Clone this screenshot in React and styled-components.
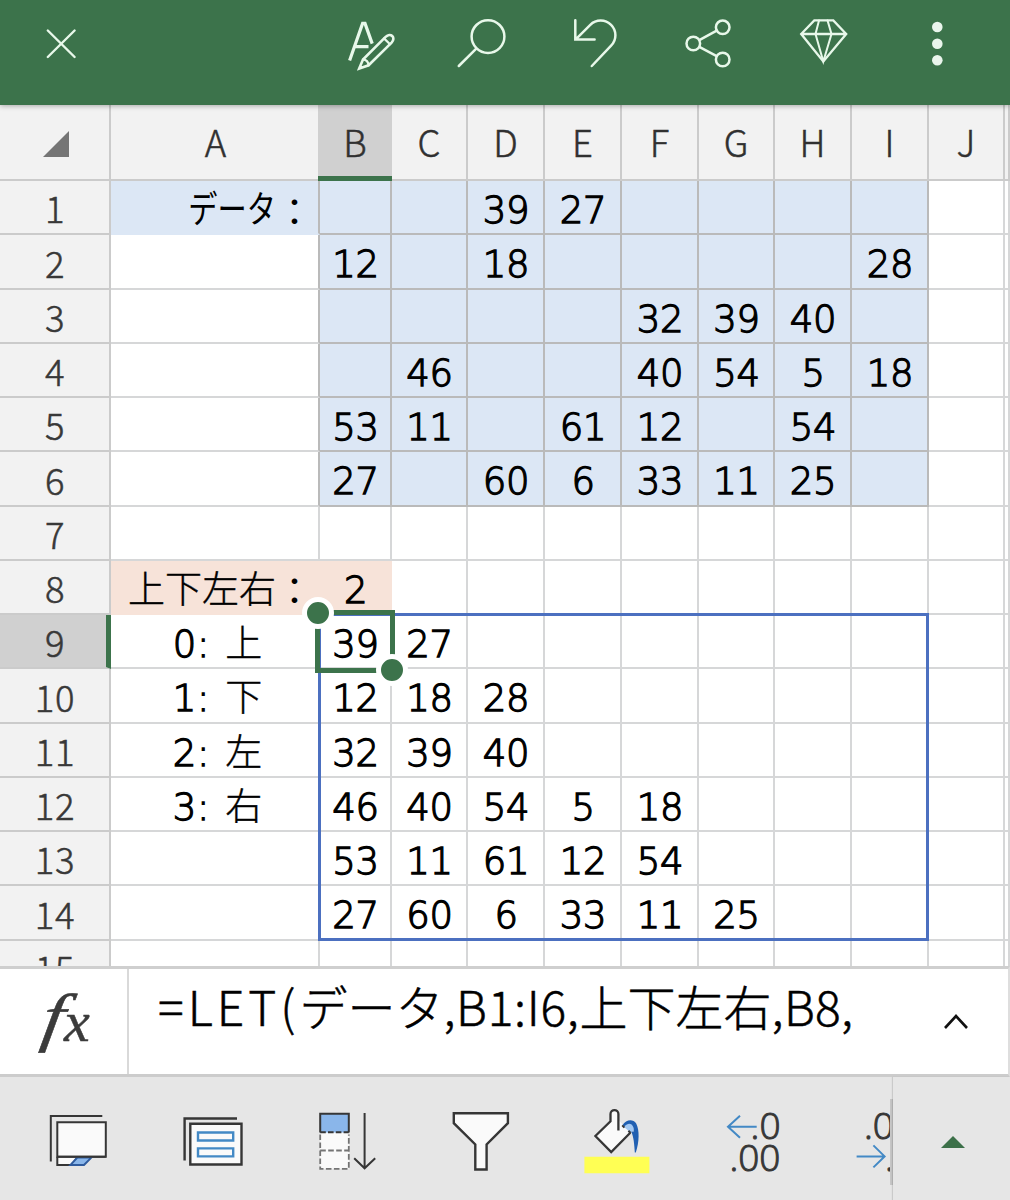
import styled, { createGlobalStyle } from "styled-components";

const COLUMNS = ["A", "B", "C", "D", "E", "F", "G", "H", "I", "J"];

const ROWS = [
    [{ kana: "データ", colon: "：" }, "", "", "39", "27", "", "", "", ""],
    ["", "12", "", "18", "", "", "", "", "28"],
    ["", "", "", "", "", "32", "39", "40", ""],
    ["", "", "46", "", "", "40", "54", "5", "18"],
    ["", "53", "11", "", "61", "12", "", "54", ""],
    ["", "27", "", "60", "6", "33", "11", "25", ""],
    [],
    [{ kanji: "上下左右", colon: "：" }, "2"],
    [{ digits: "0: ", kanji: "上" }, "39", "27"],
    [{ digits: "1: ", kanji: "下" }, "12", "18", "28"],
    [{ digits: "2: ", kanji: "左" }, "32", "39", "40"],
    [{ digits: "3: ", kanji: "右" }, "46", "40", "54", "5", "18"],
    ["", "53", "11", "61", "12", "54"],
    ["", "27", "60", "6", "33", "11", "25"],
    [],
];

const cellFill = (row, col) => {
    if (row < 6 && col > 0 && col < 9) return "data";
    if (row === 0 && col === 0) return "label";
    if (row === 7 && col < 2) return "option";
    return "plain";
};

const App = () => {
    return (
        <Screen>
            <GlobalStyle />
            <TopBar>
                <TopButton $width={122}>
                    <svg viewBox="0 0 122 105">
                        <path d="M47.8 30.5 74.6 57M74.6 30.5 47.8 57" strokeWidth="2.4" />
                    </svg>
                </TopButton>
                <TopActions>
                    <TopButton>
                        <svg viewBox="314 0 113 105">
                            <path
                                d="M349.6 60.5 362.6 23.4H365L372.2 43.6M354.8 46.6H368.5"
                                strokeWidth="3.2"
                                strokeLinecap="butt"
                            />
                            <path
                                d="M359.2 68.6 363 59.6 385.6 36.8C390.5 32 396.4 37.6 391.6 42.6L368.6 65.3Z"
                                strokeWidth="2.6"
                            />
                            <path d="M363 59.6C366 59.7 368.3 62 368.6 65.3M384 38.4 390 44.2" strokeWidth="2.2" />
                        </svg>
                    </TopButton>
                    <TopButton>
                        <svg viewBox="427 0 113 105">
                            <circle cx="488" cy="36.6" r="16.4" />
                            <path d="M476 48.8 458.8 66" />
                        </svg>
                    </TopButton>
                    <TopButton>
                        <svg viewBox="540 0 113 105">
                            <path d="M575.3 20.2V39.6H594.6M576 39.2 590.3 24.9A14.7 14.7 0 0 1 611.1 45.7L591.8 66" />
                        </svg>
                    </TopButton>
                    <TopButton>
                        <svg viewBox="653 0 113 105">
                            <circle cx="693.3" cy="43.5" r="6.8" />
                            <circle cx="722.7" cy="27.3" r="6.8" />
                            <circle cx="722.7" cy="59.5" r="6.8" />
                            <path d="M699.3 40.2 716.7 30.6M699.3 46.8 716.7 56.2" />
                        </svg>
                    </TopButton>
                    <TopButton>
                        <svg viewBox="766 0 113 105">
                            <path d="M814.3 20.4H833.3L846.2 34 823.3 61.5 801.2 34ZM801.2 34H846.2" strokeWidth="2.3" />
                            <path d="M819 20.4 815.5 34 823.3 61.5 831.5 34 827.5 20.4" strokeWidth="2" />
                        </svg>
                    </TopButton>
                    <TopButton>
                        <MoreDots viewBox="879 0 113 105">
                            <circle cx="937.3" cy="27" r="5.3" />
                            <circle cx="937.3" cy="43.7" r="5.3" />
                            <circle cx="937.3" cy="60.3" r="5.3" />
                        </MoreDots>
                    </TopButton>
                </TopActions>
            </TopBar>

            <Sheet>
                <HeaderRow>
                    <Corner>
                        <svg viewBox="0 0 26 26">
                            <path d="M26 0V26H0Z" fill="#757575" />
                        </svg>
                    </Corner>
                    {COLUMNS.map((name) => (
                        <ColumnHeader key={name} $active={name === "B"} $merge={name === "A" || name === "B"}>
                            {name}
                        </ColumnHeader>
                    ))}
                    <ColumnHeader />
                </HeaderRow>
                {ROWS.map((row, r) => (
                    <Row key={r}>
                        <RowHeader $active={r === 8}>{r + 1}</RowHeader>
                        {COLUMNS.map((name, c) => {
                            const value = row[c] || "";
                            if (typeof value === "string") {
                                return (
                                    <Cell key={name} $fill={cellFill(r, c)} $dark={r < 6 && c === 0}>
                                        {value}
                                    </Cell>
                                );
                            }
                            return (
                                <LabelCell
                                    key={name}
                                    $fill={cellFill(r, c)}
                                    $dark={r < 6}
                                    $right={Boolean(value.colon)}
                                >
                                    {value.digits && <Digits>{value.digits}</Digits>}
                                    {value.kana && <Kana>{value.kana}</Kana>}
                                    {value.kanji && <Kanji>{value.kanji}</Kanji>}
                                    {value.colon && <Colon>{value.colon}</Colon>}
                                </LabelCell>
                            );
                        })}
                        <Cell $fill="plain" />
                    </Row>
                ))}
                <SpillRange />
                <Selection>
                    <Handle $start />
                    <Handle />
                </Selection>
            </Sheet>

            <FormulaBar>
                <FxLabel>
                    <FxF>f</FxF>x
                </FxLabel>
                <Formula>
                    <Token $spacing={4}>=LET(</Token>
                    データ
                    <Token $spacing={0.7}>,B1:I6,</Token>
                    上下左右
                    <Token $spacing={0.3}>,B8,</Token>
                </Formula>
                <ExpandButton>
                    <svg viewBox="0 0 26 16">
                        <path d="M2 14 13 2 24 14" />
                    </svg>
                </ExpandButton>
            </FormulaBar>

            <BottomBar>
                <Tools>
                    <Tool $width={134}>
                        <svg viewBox="0 1077 134 123">
                            <path d="M50.8 1161.5V1115.9H102.3" />
                            <path d="M57.3 1156.7V1164.9H72L78 1156.7" fill="#fafafa" />
                            <path d="M57.3 1122.2H105.8V1156.7H57.3Z" fill="#fafafa" />
                            <path d="M77.3 1157.6H91.3L84 1164.9H70.5Z" fill="#8ab6ea" stroke="#2f5b9d" />
                            <path d="M57.3 1156.7H105.8" />
                        </svg>
                    </Tool>
                    <Tool $width={144}>
                        <svg viewBox="134 1077 144 123">
                            <path d="M184.6 1160.5V1118.5H237" strokeWidth="2.4" />
                            <path d="M190.3 1123.8H241.5V1164.5H190.3Z" fill="#fafafa" strokeWidth="2.4" />
                            <path
                                d="M198 1132.5H233.2V1140.5H198ZM198 1148.4H233.2V1156.4H198Z"
                                stroke="#4389c5"
                                strokeWidth="2.4"
                            />
                        </svg>
                    </Tool>
                    <Tool $width={136}>
                        <svg viewBox="278 1077 136 123">
                            <path d="M320.2 1132H348.8V1168.8H320.2Z" fill="#fafafa" stroke="none" />
                            <path
                                d="M320.2 1134.5V1168.8H348.8V1134.5M320.2 1150.5H348.8"
                                stroke="#747474"
                                strokeWidth="1.8"
                                strokeDasharray="5.6 2.4"
                            />
                            <path d="M320.2 1132.5V1113.8H348.8V1132.5" fill="#8ab6ea" />
                            <path d="M320.2 1132.3H348.8" strokeDasharray="5.6 2.2" />
                            <path d="M364.6 1113V1168M354.2 1158.2 364.6 1168.3 375.2 1158.2" />
                        </svg>
                    </Tool>
                    <Tool $width={134}>
                        <svg viewBox="414 1077 134 123">
                            <path
                                d="M453.8 1113.2H507.9V1123.2L486.6 1144.4V1169.5H475.3V1144.4L453.8 1123.2Z"
                                fill="#fafafa"
                                strokeWidth="2.4"
                            />
                        </svg>
                    </Tool>
                    <Tool $width={140}>
                        <svg viewBox="548 1077 140 123">
                            <path
                                d="M610.5 1121.5 595.2 1136 611.2 1152.3 630.5 1132.5 618.4 1120Z"
                                fill="#fafafa"
                                stroke="none"
                            />
                            <path
                                d="M618.4 1130.6V1114C618.4 1108.8 610.5 1108.8 610.5 1114V1121.2L595.4 1136 611.2 1152 630.3 1132.8"
                                fill="#fafafa"
                                strokeWidth="2.3"
                            />
                            <path d="M622.8 1126 626 1122 633 1124 634 1131 630.5 1132.5Z" fill="#a3c9f3" stroke="none" />
                            <path
                                d="M622.6 1125C626 1119.4 633 1118.6 636.2 1123.5C639.6 1130 639.4 1142 635.8 1152.5H634.8C634.4 1145 633.6 1136 631.2 1131.8L633.8 1131.4C634.4 1125 629.4 1120.8 624.4 1126.6Z"
                                fill="#2160b2"
                                stroke="none"
                            />
                            <path d="M622.2 1125.4 624.4 1127.6M628.4 1130.8 630.6 1133" />
                            <path d="M584.4 1156.7H649.4V1173.2H584.4Z" fill="#ffff54" stroke="none" />
                        </svg>
                    </Tool>
                    <Tool $width={132}>
                        <svg viewBox="688 1077 132 123">
                            <path d="M756.7 1126.7H728M740 1115.7 728 1126.7 740 1137.7" stroke="#4389c5" />
                            <ToolText x="780.5" y="1138.5" textAnchor="end">.0</ToolText>
                            <ToolText x="780.5" y="1170.8" textAnchor="end">.00</ToolText>
                        </svg>
                    </Tool>
                    <Tool $width={132}>
                        <svg viewBox="820 1077 132 123">
                            <ToolText x="864" y="1138.5">.00</ToolText>
                            <path d="M856.6 1156.4H884.3M873.4 1145.4 884.6 1156.4 873.4 1167.4" stroke="#4389c5" />
                            <ToolText x="885" y="1170.8">.0</ToolText>
                        </svg>
                    </Tool>
                </Tools>
                <ScrollEdge />
                <MorePanel>
                    <svg viewBox="0 0 24 12">
                        <path d="M0 12 12 0 24 12Z" fill="#3c7049" />
                    </svg>
                </MorePanel>
            </BottomBar>
        </Screen>
    );
};

const GlobalStyle = createGlobalStyle`
    * {
        box-sizing: border-box;
    }
    body {
        margin: 0;
        overflow: hidden;
    }
    svg {
        display: block;
        flex-shrink: 0;
    }
`;

const Screen = styled.div`
    display: flex;
    flex-direction: column;
    width: 1010px;
    height: 1200px;
    overflow: hidden;
    background-color: white;
    font-family: "Noto Sans CJK JP", sans-serif;
`;

const TopBar = styled.header`
    position: relative;
    z-index: 2;
    display: flex;
    justify-content: space-between;
    flex-shrink: 0;
    height: 105px;
    padding-right: 18px;
    background-color: #3c734b;
    box-shadow: 0 1px 5px rgba(0, 0, 0, 0.3);
`;

const TopActions = styled.div`
    display: flex;
`;

const TopButton = styled.button`
    width: ${(props) => props.$width || 113}px;
    height: 105px;
    padding: 0;
    border: 0;
    background: transparent;
    svg {
        width: 100%;
        height: 100%;
        fill: none;
        stroke: #e8f8ea;
        stroke-width: 2.5;
        stroke-linecap: round;
    }
`;

const MoreDots = styled.svg`
    && {
        fill: #eaf5ec;
        stroke: none;
    }
`;

const Sheet = styled.main`
    position: relative;
    flex-shrink: 0;
    height: 861px;
    overflow: hidden;
`;

const Row = styled.div`
    display: grid;
    grid-template-columns: 111px 209px 72px 76px 77px 77px 77px 76px 77px 77px 76px 5px;
    height: 54.25px;
`;

const HeaderRow = styled(Row)`
    height: 76px;
`;

const headerColor = "#f2f2f2";

const Corner = styled.div`
    display: flex;
    justify-content: flex-end;
    align-items: flex-end;
    padding: 0 40px 22px 0;
    background-color: ${headerColor};
    border-right: 2px solid #cbcbcb;
    border-bottom: 2px solid #cbcbcb;
    svg {
        width: 26px;
        height: 26px;
    }
`;

const ColumnHeader = styled.div`
    display: flex;
    justify-content: center;
    align-items: center;
    padding-top: ${(props) => (props.$active ? "3px" : "0")};
    margin-left: ${(props) => (props.$active ? "-2px" : "0")};
    background-color: ${(props) => (props.$active ? "#d0d0d0" : headerColor)};
    border-right: ${(props) => (props.$merge ? "0" : "2px solid #cbcbcb")};
    border-bottom: ${(props) => (props.$active ? "5px solid #3c734b" : "2px solid #cbcbcb")};
    color: #303030;
    font-size: 36.5px;
    font-weight: 300;
    line-height: 1;
    -webkit-text-stroke: 0.5px #303030;
`;

const RowHeader = styled.div`
    display: flex;
    justify-content: center;
    align-items: center;
    padding: ${(props) => (props.$active ? "3px 0 0 4px" : "3px 0 0 1px")};
    background-color: ${(props) => (props.$active ? "#d0d0d0" : headerColor)};
    border-right: ${(props) => (props.$active ? "5px solid #3c734b" : "2px solid #cbcbcb")};
    border-bottom: 2px solid #cbcbcb;
    color: #383838;
    font-size: 36.5px;
    font-weight: 300;
    line-height: 1;
    letter-spacing: 0.6px;
    -webkit-text-stroke: 0.5px #383838;
`;

const fills = {
    data: { color: "#dce7f5", line: "#bababa" },
    label: { color: "#dce7f5", line: "#dce7f5" },
    option: { color: "#f7e3d9", line: "#f7e3d9" },
    plain: { color: "#ffffff", line: "#d6d7d8" },
};

const Cell = styled.div`
    display: flex;
    justify-content: center;
    align-items: center;
    padding: 7px 0 0 1px;
    background-color: ${(props) => fills[props.$fill].color};
    border-right: 2px solid ${(props) => (props.$dark ? "#bababa" : fills[props.$fill].line)};
    border-bottom: 2px solid ${(props) => fills[props.$fill].line};
    color: black;
    font-family: "DejaVu Sans", sans-serif;
    font-size: 37px;
    font-weight: 200;
    line-height: 1;
    letter-spacing: -0.3px;
    -webkit-text-stroke: 1.3px black;
`;

const LabelCell = styled(Cell)`
    justify-content: ${(props) => (props.$right ? "flex-end" : "center")};
    padding: ${(props) => (props.$right ? "8px 5px 0 0" : "7px 0 0 6px")};
    letter-spacing: 0;
    white-space: pre;
`;

const Digits = styled.span`
    letter-spacing: 0.5px;
    word-spacing: 3px;
`;

const Glyphs = styled.span`
    font-family: "Noto Sans CJK JP", sans-serif;
    -webkit-text-stroke: 0;
`;

const Kanji = styled(Glyphs)`
    font-weight: 300;
    transform: translateY(-3px);
    -webkit-text-stroke: 0.4px black;
`;

const Kana = styled(Glyphs)`
    font-weight: 400;
    transform: translateY(-4px) scaleX(0.79);
    transform-origin: right center;
`;

const Colon = styled(Glyphs)`
    font-weight: 400;
    transform: translateY(-1.5px);
`;

const SpillRange = styled.div`
    position: absolute;
    left: 318px;
    top: 508px;
    width: 611px;
    height: 328px;
    border: 3px solid #4c70c0;
`;

const Selection = styled.div`
    position: absolute;
    left: 315px;
    top: 505px;
    width: 80px;
    height: 63px;
    border: 5px solid #3c734b;
`;

const Handle = styled.span`
    position: absolute;
    ${(props) => (props.$start ? "left: -18px; top: -18px;" : "right: -18px; bottom: -18px;")}
    width: 32px;
    height: 32px;
    border: 5px solid white;
    border-radius: 50%;
    background-color: #3c734b;
`;

const FormulaBar = styled.section`
    display: flex;
    flex-shrink: 0;
    height: 111px;
    border-top: 3px solid #cfcfcf;
    border-right: 2px solid #dedede;
    border-bottom: 3px solid #cccccc;
    background-color: white;
`;

const FxLabel = styled.div`
    display: flex;
    align-items: baseline;
    width: 129px;
    padding: 15px 0 0 46px;
    border-right: 2px solid #d9d9d9;
    color: #3b3b3b;
    font-family: "Liberation Serif", serif;
    font-size: 58px;
    font-style: italic;
    line-height: 70px;
    -webkit-text-stroke: 0.5px #3b3b3b;
`;

const FxF = styled.span`
    font-size: 65px;
    transform: translate(-1px, -2px) skewX(-9deg) scaleX(1.2);
`;

const Formula = styled.div`
    display: flex;
    flex: 1;
    padding: 12px 0 0 29px;
    color: black;
    font-size: 48px;
    font-weight: 300;
    line-height: 1;
    white-space: nowrap;
    -webkit-text-stroke: 0.5px black;
`;

const Token = styled.span`
    letter-spacing: ${(props) => props.$spacing}px;
`;

const ExpandButton = styled.button`
    display: flex;
    justify-content: center;
    width: 104px;
    padding: 45px 0 0;
    border: 0;
    background: transparent;
    svg {
        width: 26px;
        height: 16px;
        fill: none;
        stroke: #111111;
        stroke-width: 2.6;
    }
`;

const BottomBar = styled.footer`
    display: flex;
    align-items: flex-start;
    flex: 1;
    background-color: #e6e6e6;
`;

const Tools = styled.div`
    display: flex;
    width: 890px;
    overflow: hidden;
`;

const Tool = styled.button`
    flex-shrink: 0;
    width: ${(props) => props.$width}px;
    height: 123px;
    padding: 0;
    border: 0;
    background: transparent;
    svg {
        width: 100%;
        height: 100%;
        fill: none;
        stroke: #363636;
        stroke-width: 2;
    }
`;

const ToolText = styled.text`
    fill: #363636;
    stroke: #363636;
    stroke-width: 1px;
    font-family: "Open Sans", sans-serif;
    font-size: 37px;
    font-weight: 300;
`;

const ScrollEdge = styled.div`
    width: 3px;
    height: 86px;
    margin-top: 22px;
    background-color: #c6c6c6;
`;

const MorePanel = styled.div`
    display: flex;
    justify-content: center;
    width: 117px;
    height: 123px;
    padding: 59px 0 0 2px;
    box-shadow: -1px 0 1px rgba(0, 0, 0, 0.12);
    svg {
        width: 24px;
        height: 12px;
    }
`;

export default App;
